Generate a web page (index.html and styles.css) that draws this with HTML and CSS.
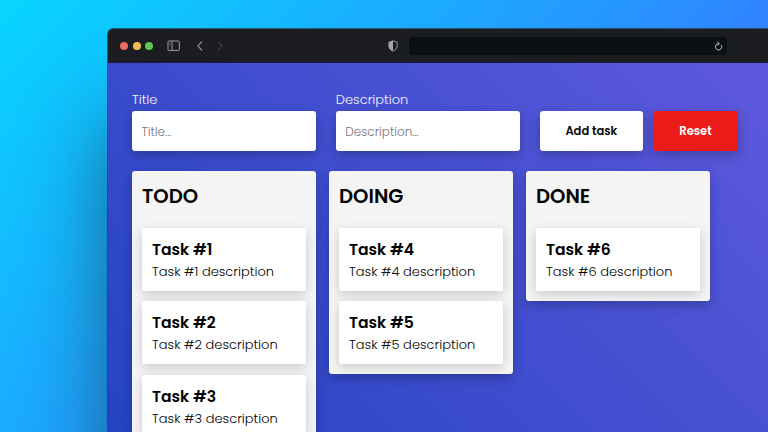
FILE: index.html
```html
<!DOCTYPE html>
<html lang="en">
<head>
<meta charset="utf-8">
<title>Task board</title>
<link rel="stylesheet" href="styles.css">
</head>
<body>
<div class="window">
  <header class="toolbar">
    <div class="lights"><i class="light red"></i><i class="light yellow"></i><i class="light green"></i></div>
    <svg class="sidebar-icon" width="14" height="12" viewBox="0 0 14 12" fill="none" stroke="#9a9ba3"><rect x="1" y="1" width="11.4" height="9.4" rx="1"/><path d="M5 1v9.500M2.500 3.200h1M2.500 5h1"/></svg>
    <svg class="back-icon" width="8" height="12" viewBox="0 0 8 12" fill="none" stroke="#a9a9ae" stroke-width="1.1"><path d="M6 1.500 2 6l4 4.500"/></svg>
    <svg class="forward-icon" width="8" height="12" viewBox="0 0 8 12" fill="none" stroke="#434347" stroke-width="1.1"><path d="m2 1.500 4 4.500-4 4.500"/></svg>
    <svg class="shield-icon" width="10" height="12" viewBox="0 0 10 12"><path d="M5 .8 9.100 2.200v4.200c0 2.200-1.700 3.600-4.100 4.700C2.600 10 .9 8.600.9 6.400V2.200Z" fill="none" stroke="#a4a6a9" stroke-width=".9"/><path d="M5 .8v10.300C2.600 10 .9 8.600.9 6.400V2.200Z" fill="#a4a6a9"/></svg>
    <div class="address"><svg width="9" height="10" viewBox="0 0 9 10" fill="none" stroke="#d5d8da" stroke-width=".9"><path d="M7.200 4.100A3.100 3.100 0 1 1 4.500 2.700H5M3.400.8 5.200 2.700 3.500 4.400"/></svg></div>
  </header>
  <main class="app">
    <form class="form">
      <label class="field"><span class="label">Title</span><input class="input" placeholder="Title..."></label>
      <label class="field"><span class="label">Description</span><input class="input" placeholder="Description..."></label>
      <div class="actions"><button type="button" class="button add">Add task</button><button type="button" class="button reset">Reset</button></div>
    </form>
    <div class="board">
      <section class="column">
        <h2>TODO</h2>
        <article class="card"><h3>Task #1</h3><p>Task #1 description</p></article>
        <article class="card"><h3>Task #2</h3><p>Task #2 description</p></article>
        <article class="card"><h3>Task #3</h3><p>Task #3 description</p></article>
      </section>
      <section class="column">
        <h2>DOING</h2>
        <article class="card"><h3>Task #4</h3><p>Task #4 description</p></article>
        <article class="card"><h3>Task #5</h3><p>Task #5 description</p></article>
      </section>
      <section class="column">
        <h2>DONE</h2>
        <article class="card"><h3>Task #6</h3><p>Task #6 description</p></article>
      </section>
    </div>
  </main>
</div>
</body>
</html>
```
FILE: styles.css
```css
* { box-sizing: border-box; }
body {
  margin: 0;
  height: 432px;
  overflow: hidden;
  padding: 29px 0 0 108px;
  font-family: Poppins, Inter, sans-serif;
  background: linear-gradient(135deg, #08d5ff 0%, #1ea6ff 40%, #3183ff 66%, #3680ff 100%);
}
.window {
  width: 660px;
  height: 403px;
  border-radius: 5px 0 0 0;
  overflow: hidden;
  box-shadow: 0 0 0 1px rgba(35, 60, 75, .75), 0 95px 80px rgba(20, 50, 65, .6);
}
.toolbar {
  height: 33.500px;
  display: flex;
  align-items: center;
  padding: 1px 0 0 12px;
  background: #1c1d20;
  border-bottom: 1px solid #1b1b3e;
}
.lights { display: flex; gap: 4.500px; }
.light { width: 8px; height: 8px; border-radius: 50%; }
.red { background: #ec6b62; }
.yellow { background: #f4bf50; }
.green { background: #62c554; }
.sidebar-icon { margin-left: 14.300px; }
.back-icon { margin-left: 15px; }
.forward-icon { margin-left: 12px; }
.shield-icon { margin-left: 164.200px; }
.address {
  width: 318px;
  height: 18px;
  margin-left: 11px;
  border-radius: 3px;
  background: #0b0e12;
  display: flex;
  align-items: center;
  justify-content: flex-end;
  padding-right: 4px;
}
.app {
  height: 369.500px;
  padding: 25.500px 24px 0;
  overflow: hidden;
  background: linear-gradient(45deg, #2444c3 0%, #5c58db 96%);
}
.form { display: flex; align-items: flex-end; gap: 19.800px; }
.field { display: flex; flex-direction: column; width: 184px; }
.label {
  height: 23px;
  line-height: 23px;
  font-size: 13px;
  font-weight: 300;
  color: #f4f5ff;
}
.input {
  width: 184px;
  height: 39.500px;
  border: 0;
  border-radius: 3px;
  padding: 2px 9.500px 0;
  background: #fff;
  font: 300 12px Poppins, Inter, sans-serif;
  box-shadow: 0 4px 12px rgba(0, 0, 0, .24);
}
.input::placeholder { color: #757575; opacity: 1; }
.actions { display: flex; gap: 10px; }
.button {
  height: 39.500px;
  padding: 2px 0 0;
  border: 0;
  border-radius: 3px;
  font: 600 11.500px Poppins, Inter, sans-serif;
  box-shadow: 0 4px 12px rgba(0, 0, 0, .24);
}
.add { width: 103.400px; background: #fff; color: #080808; }
.reset { width: 85px; background: #eb1b19; color: #fff; }
.board { display: flex; align-items: flex-start; gap: 13px; margin-top: 20px; }
.column {
  width: 184px;
  padding: 10px;
  border-radius: 3px;
  background: #f4f4f4;
  box-shadow: 0 4px 12px rgba(0, 0, 0, .24);
}
.column h2 {
  margin: 0 0 17px;
  font-size: 19.600px;
  line-height: 30px;
  font-weight: 600;
  color: #050505;
}
.card {
  height: 63.450px;
  padding: 10px;
  border-radius: 2px;
  background: #fff;
  color: #000;
  box-shadow: 0 3px 11px rgba(0, 0, 0, .18);
}
.card + .card { margin-top: 10px; }
.card + .card + .card { margin-top: 10.600px; }
.card h3 { margin: 0; font-size: 15.600px; line-height: 24px; font-weight: 600; }
.card p { margin: 0; font-size: 13px; line-height: 20px; font-weight: 300; white-space: nowrap; }
```
